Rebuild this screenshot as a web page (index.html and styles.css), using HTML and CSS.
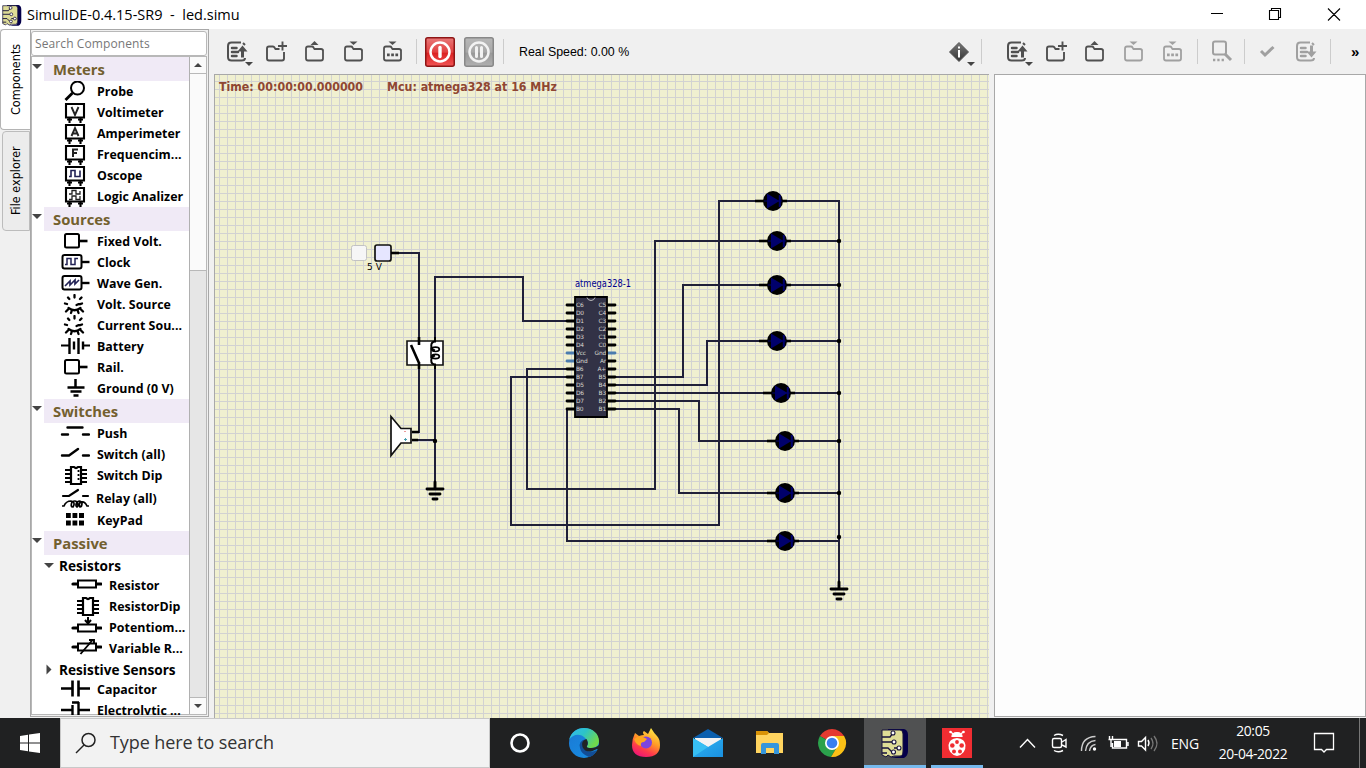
FILE: index.html
```html
<!DOCTYPE html>
<html lang="en">
<head>
<meta charset="utf-8">
<title>SimulIDE-0.4.15-SR9 - led.simu</title>
<link rel="stylesheet" href="styles.css">
</head>
<body>
<svg class="defs" aria-hidden="true">
<defs>
<linearGradient id="gred" x1="0" y1="0" x2="0" y2="1"><stop offset="0" stop-color="#e87878"/><stop offset=".5" stop-color="#e24040"/><stop offset=".55" stop-color="#dc2222"/><stop offset="1" stop-color="#f05555"/></linearGradient>
<linearGradient id="ggrey" x1="0" y1="0" x2="0" y2="1"><stop offset="0" stop-color="#b8b8b8"/><stop offset=".5" stop-color="#a8a8a8"/><stop offset=".55" stop-color="#999"/><stop offset="1" stop-color="#b0b0b0"/></linearGradient>
<linearGradient id="ginfo" x1="0" y1="0" x2="0" y2="1"><stop offset="0" stop-color="#777"/><stop offset="1" stop-color="#333"/></linearGradient>
<linearGradient id="gedge" x1="0" y1="0" x2="1" y2=".5"><stop offset="0" stop-color="#35b8f0"/><stop offset=".5" stop-color="#2cc3c9"/><stop offset="1" stop-color="#70d94c"/></linearGradient>
<linearGradient id="gedge2" x1="0" y1="0" x2="1" y2="1"><stop offset="0" stop-color="#1b78d4"/><stop offset="1" stop-color="#1690e4"/></linearGradient>
<linearGradient id="gfox" x1=".8" y1="0" x2=".3" y2="1"><stop offset="0" stop-color="#fff04a"/><stop offset=".45" stop-color="#ff9a25"/><stop offset=".75" stop-color="#ff3b4b"/><stop offset="1" stop-color="#ee1577"/></linearGradient>
<linearGradient id="gmail" x1="0" y1="0" x2="1" y2="1"><stop offset="0" stop-color="#2fb5f2"/><stop offset="1" stop-color="#1a90e0"/></linearGradient>
<symbol id="list" viewBox="0 0 28 28"><g fill="none" stroke="currentColor" stroke-width="2"><path d="M18 4.600H8.500Q5 4.600 5 8v11q0 3.500 3.500 3.500h10Q22 22.500 22 20M20 5l2 2"/><path d="M9 10h4.500M9 14h6M9 18h4.500" stroke-width="2.500" stroke-linecap="round"/></g></symbol>
<symbol id="up" viewBox="0 0 28 28"><use href="#list"/><path d="M19.500 7.500l5 6h-3.500v6h-3v-6h-3.500z" fill="currentColor"/></symbol>
<symbol id="down" viewBox="0 0 28 28"><use href="#list"/><path d="M19.500 19.500l5-6h-3.500v-6h-3v6h-3.500z" fill="currentColor"/></symbol>
<symbol id="folder" viewBox="0 0 28 28"><path d="M22 11.500v9q0 2-2 2H7q-2 0-2-2v-10q0-2 2-2h4q1 0 1.500 1l1 1.500h6.500q2 0 2 2z" fill="none" stroke="currentColor" stroke-width="1.800"/></symbol>
<symbol id="fup" viewBox="0 0 28 28"><use href="#folder"/><path d="M9.500 7l4-4 4 4z" fill="currentColor"/></symbol>
<symbol id="fdown" viewBox="0 0 28 28"><use href="#folder"/><path d="M9.500 3.500l4 3.500 4-3.500z" fill="currentColor"/></symbol>
<symbol id="fdots" viewBox="0 0 28 28"><use href="#fdown"/><path d="M8 15.500h2.700v2.700H8zM12.200 15.500h2.700v2.700h-2.700zM16.400 15.500h2.700v2.700h-2.700z" fill="currentColor"/></symbol>
<symbol id="fplus" viewBox="0 0 28 28"><path d="M22 14v6.500q0 2-2 2H7q-2 0-2-2v-10q0-2 2-2h4q1 0 1.500 1l1 1.500h4M20.500 3.500v9M16 8h9" fill="none" stroke="currentColor" stroke-width="1.900"/></symbol>
<symbol id="meter" viewBox="0 0 32 21"><path d="M8 2h18v13.500H8zM11.500 16v5M22.500 16v5" fill="none" stroke="#000" stroke-width="2.100"/><path d="M9 17.500h5M20 17.500h5" stroke="#000" stroke-width="2"/></symbol>
<symbol id="rail" viewBox="0 0 32 21"><rect x="7" y="3" width="14" height="13.500" rx="1.500" fill="#fff" stroke="#000" stroke-width="2"/><path d="M21 10h8.500" stroke="#000" stroke-width="2.600"/></symbol>
<symbol id="gen" viewBox="0 0 32 21"><rect x="4.500" y="3" width="19" height="13.500" rx="2" fill="#fff" stroke="#000" stroke-width="2"/><path d="M23 10h8.500" stroke="#000" stroke-width="2.400"/></symbol>
<symbol id="dial" viewBox="0 0 32 21"><g fill="none" stroke="#000" stroke-linecap="round"><path d="M16.500 1v2.500M10 3.500l1.300 1.500M23.500 3.500L22 5M7 9.500l2 .5M24 9.500l-2 .5M8 17.500l2-2M25 17.500l-2-2M13 19l1-3M20.500 19l-1-3" stroke-width="2.300"/><path d="M10.500 14q6 4.500 12 0M18.500 11l2-.8h2" stroke-width="2.200"/></g></symbol>
<symbol id="gnd" viewBox="0 0 32 21"><path d="M17.500 1v8M9.500 9.500h17M12.500 13.500h11M15.500 17.500h5" stroke="#000" stroke-width="2.500"/></symbol>
<symbol id="dip" viewBox="0 0 32 21"><path d="M7 5h22M7 9h22M7 13h22M7 17h22" stroke="#000" stroke-width="2"/><path d="M13 2h3q2 2 4 0h3v17H13z" fill="#fff" stroke="#000" stroke-width="2.200"/></symbol>
<symbol id="res" viewBox="0 0 32 21"><path d="M3 9h28" stroke="#000" stroke-width="3.200" stroke-linecap="round"/><rect x="8" y="5.500" width="18" height="7" fill="#fff" stroke="#000" stroke-width="2"/></symbol>
<symbol id="chip" viewBox="0 0 28 30"><path d="M7 1h16q4 1 4 6v16q0 5-4 7H9l12-2V3L7 3z" fill="#05004a"/><path d="M1 2h18q3 0 3 4v17q0 5-3 5h-6l-3 1-3-2-2 2-4-2z" fill="#dedc96" stroke="#17123c"/><path d="M1 9h8l3-4M1 14h11M1 20h6l4 4M1 25h5M13 20h4" fill="none" stroke="#17123c" stroke-width="1.300"/><g fill="#fff" stroke="#17123c" stroke-width="1.100"><circle cx="12" cy="5" r="2"/><circle cx="13" cy="14" r="2"/><circle cx="18" cy="20" r="2"/><circle cx="12.500" cy="24" r="2"/></g></symbol>
<symbol id="led" viewBox="-20 -12 40 24"><path d="M-18 0H14" stroke="#000" stroke-width="2.600"/><circle r="10" fill="#000"/><path d="M-9 0H9" stroke="#000066" stroke-width="1"/><path d="M-6-7.500L6.500 0-6 7.500z" fill="#00006c"/><path d="M6.800-6v12" stroke="#00006c" stroke-width="2"/></symbol>
</defs>
</svg>
<div class="window">
<header class="titlebar">
 <svg class="appicon" width="20" height="22"><use href="#chip"/></svg>
 <span class="title">SimulIDE-0.4.15-SR9&nbsp; -&nbsp; led.simu</span>
 <svg class="winbtns" width="164" height="29" viewBox="1202 0 164 29"><g fill="none" stroke="#000" stroke-width="1.100"><path d="M1211 13.500h12M1269.500 10.500h9v9h-9zM1271.500 10v-1.500h9v9h-2M1328 8.500l12 12M1340 8.500l-12 12"/></g></svg>
</header>
<main class="main">
 <nav class="tabs"><div class="tab on">Components</div><div class="tab file">File explorer</div></nav>
 <aside class="side">
  <div class="search">Search Components</div>
  <div class="treebox">
   <div class="tree">
    <div class="cat"><i class="tri"></i><b>Meters</b></div>
    <div class="row"><svg><circle cx="19.500" cy="7" r="6.500" fill="none" stroke="#000" stroke-width="2"/><path d="M14.500 12l-7 7" stroke="#000" stroke-width="2.800"/></svg>Probe</div>
    <div class="row"><svg><use href="#meter"/><path d="M13.500 5l3.500 8 3.500-8" fill="none" stroke="#222" stroke-width="1.900"/></svg>Voltimeter</div>
    <div class="row"><svg><use href="#meter"/><path d="M13.500 13L17 5l3.500 8M15 10.500h4" fill="none" stroke="#222" stroke-width="1.900"/></svg>Amperimeter</div>
    <div class="row"><svg><use href="#meter"/><path d="M15 13V5.500h5M15 9h4" fill="none" stroke="#222" stroke-width="2"/></svg>Frequencim...</div>
    <div class="row"><svg><use href="#meter"/><path d="M11 11.500h2v-6h4v6h5v-6" fill="none" stroke="#225" stroke-width="1.600"/></svg>Oscope</div>
    <div class="row"><svg><use href="#meter"/><path d="M11 8h3V4.500h4V8h4V5M11 13.500h3V10h4v3.500h4V10" fill="none" stroke="#222" stroke-width="1.300"/></svg>Logic Analizer</div>
    <div class="cat"><i class="tri"></i><b>Sources</b></div>
    <div class="row"><svg><use href="#rail"/></svg>Fixed Volt.</div>
    <div class="row"><svg><use href="#gen"/><path d="M7 12.500h2v-6h4v6h4v-6h3" fill="none" stroke="#225" stroke-width="1.500"/></svg>Clock</div>
    <div class="row"><svg><use href="#gen"/><path d="M7 13l5-5v4l5-5v4l4-4" fill="none" stroke="#225" stroke-width="1.700"/></svg>Wave Gen.</div>
    <div class="row"><svg><use href="#dial"/></svg>Volt. Source</div>
    <div class="row"><svg><use href="#dial"/></svg>Current Sou...</div>
    <div class="row"><svg><path d="M3 9.500h8M25 9.500h7" stroke="#000" stroke-width="2.200"/><path d="M11.500 2v16M16 5.500v8M20.500 2v16M25 5.500v8" stroke="#000" stroke-width="2.400"/></svg>Battery</div>
    <div class="row"><svg><use href="#rail"/></svg>Rail.</div>
    <div class="row"><svg><use href="#gnd"/></svg>Ground (0 V)</div>
    <div class="cat"><i class="tri"></i><b>Switches</b></div>
    <div class="row"><svg><path d="M4 11.500h6M25 11.500h6M9.500 4.500h15" stroke="#000" stroke-width="2.400" stroke-linecap="round"/></svg>Push</div>
    <div class="row"><svg><path d="M4 11.500h7l9-6.500M25 11.500h6" fill="none" stroke="#000" stroke-width="2.400" stroke-linecap="round"/></svg>Switch (all)</div>
    <div class="row"><svg><use href="#dip"/><path d="M20.500 5v12" stroke="#000" stroke-width="1.800" stroke-dasharray="2 2"/></svg>Switch Dip</div>
    <div class="row relay"><svg><path d="M5 10h6l9-6M25 10h5" fill="none" stroke="#000" stroke-width="2.200" stroke-linecap="round"/><path d="M4 20h2q2-5 7-5 5 1 2 6-3 0-1-5 3-2 5 0 2 4 0 5-2-1 0-5 4-2 5 1 0 4-2 4-2-3 1-5 4-1 6 4h2" fill="none" stroke="#000" stroke-width="1.700"/></svg>Relay (all)</div>
    <div class="row"><svg><path d="M8 3h4.800v5H8zM14.500 3h4.800v5h-4.800zM21 3h5v5h-5zM8 10.500h4.800v5H8zM14.500 10.500h4.800v5h-4.800zM21 10.500h5v5h-5z"/></svg>KeyPad</div>
    <div class="cat"><i class="tri"></i><b>Passive</b></div>
    <div class="sub"><i class="tri"></i>Resistors</div>
    <div class="row deep"><svg><use href="#res"/></svg>Resistor</div>
    <div class="row deep"><svg><use href="#dip"/></svg>ResistorDip</div>
    <div class="row deep"><svg><use href="#res" y="2"/><path d="M18 0v6M15 3l3 3.500 3-3.500" fill="none" stroke="#000" stroke-width="2"/></svg>Potentiom...</div>
    <div class="row deep"><svg><use href="#res"/><path d="M10.500 16L23 1.500M19 2h5v4" fill="none" stroke="#000" stroke-width="1.900"/></svg>Variable R...</div>
    <div class="sub"><i class="tri closed"></i>Resistive Sensors</div>
    <div class="row"><svg><path d="M3 9.500h11M21 9.500h11M14.500 1.500v16M20.500 1.500v16" stroke="#000" stroke-width="2.600"/></svg>Capacitor</div>
    <div class="row"><svg><path d="M3 10h11M21 10h11M20.500 2v18M14.500 5v11M14 2.500h7" stroke="#000" stroke-width="2.400"/></svg>Electrolytic ...</div>
   </div>
   <div class="scroll"><div class="sbtn"><i class="tri rev"></i></div><div class="thumb"></div><div class="sbtn end"><i class="tri"></i></div></div>
  </div>
 </aside>
 <section class="center">
  <div class="toolbar">
   <span class="tool menu"><svg><use href="#up"/></svg></span><span class="tool"><svg><use href="#fplus"/></svg></span><span class="tool"><svg><use href="#fup"/></svg></span><span class="tool"><svg><use href="#fdown"/></svg></span><span class="tool"><svg><use href="#fdots"/></svg></span>
   <i class="sep s1"></i>
   <svg class="pwr" viewBox="0 0 30 30"><rect x=".75" y=".75" width="28.500" height="28.500" rx="2" fill="url(#gred)" stroke="#8e1414" stroke-width="1.500"/><circle cx="15" cy="15" r="9.500" fill="none" stroke="#fff" stroke-width="2.500"/><path d="M15 10.500v9" stroke="#fff" stroke-width="3.400" stroke-linecap="round"/></svg>
   <svg class="pwr" viewBox="0 0 30 30"><rect x=".75" y=".75" width="28.500" height="28.500" rx="2" fill="url(#ggrey)" stroke="#888" stroke-width="1.500"/><circle cx="15" cy="15" r="9.500" fill="none" stroke="#f2f2f2" stroke-width="2.500"/><path d="M12.500 10.500v9M17.500 10.500v9" stroke="#f2f2f2" stroke-width="3" stroke-linecap="round"/></svg>
   <i class="sep"></i>
   <span class="speed">Real Speed: 0.00 %</span>
   <span class="tool menu info"><svg viewBox="0 0 28 28"><path d="M14 4.500L23.500 14 14 23.500 4.500 14z" fill="url(#ginfo)" stroke="#555" stroke-linejoin="round"/><path d="M14 8.500v2M14 12v7.500" stroke="#fff" stroke-width="2"/></svg></span>
   <i class="sep last"></i>
  </div>
  <div class="canvas">
   <svg class="circuit" width="774" height="643" viewBox="215 75 774 643">
    <g class="status"><text x="219" y="91" textLength="144" lengthAdjust="spacingAndGlyphs">Time: 00:00:00.000000</text><text x="387" y="91" textLength="170" lengthAdjust="spacingAndGlyphs">Mcu: atmega328 at 16 MHz</text></g>
    <g class="wires">
     <path d="M398 253H419V341M435 341V277H523V321H567M419 366V432H412M435 366V485M412 440H435"/>
     <path d="M567 369H527V489H655V241H839M567 377H511V525H719V201H839V585M567 409V541H839"/>
     <path d="M615 377H683V285H839M615 385H707V341H839M615 393H839M615 401H699V441H839M615 409H679V493H839"/>
    </g>
    <g><circle cx="839" cy="241" r="2.200"/><circle cx="839" cy="285" r="2.200"/><circle cx="839" cy="341" r="2.200"/><circle cx="839" cy="393" r="2.200"/><circle cx="839" cy="441" r="2.200"/><circle cx="839" cy="493" r="2.200"/><circle cx="839" cy="537" r="2.200"/><circle cx="435" cy="441" r="2.200"/></g>
    <g><use href="#led" x="753" y="189" width="40" height="24"/><use href="#led" x="757" y="229" width="40" height="24"/><use href="#led" x="757" y="273" width="40" height="24"/><use href="#led" x="757" y="329" width="40" height="24"/><use href="#led" x="761" y="381" width="40" height="24"/><use href="#led" x="765" y="429" width="40" height="24"/><use href="#led" x="765" y="481" width="40" height="24"/><use href="#led" x="765" y="529" width="40" height="24"/></g>
    <rect x="351.500" y="245.500" width="15" height="15" rx="2" fill="#f6f6f6" stroke="#c2c2c2"/>
    <rect x="375" y="245" width="16" height="16" rx="2" fill="#e6e6ff" stroke="#111" stroke-width="1.700"/><path d="M391 253h8" stroke="#000" stroke-width="2.600"/>
    <text class="volt" x="367" y="270" textLength="15">5 V</text>
    <path d="M407 341h36v24h-36z" fill="#fff" stroke="#111" stroke-width="1.600"/>
    <path d="M419 337v8M419 369v-7M411 345l8 18" fill="none" stroke="#000" stroke-width="2.600"/>
    <path d="M435 337v4.500C430 342 430 349 435 350.500M435 355.500C430 357 430 364 435 364.500V369" fill="none" stroke="#000" stroke-width="2"/><path d="M431 347.500C431 352 431 357 431 358" fill="none" stroke="#000" stroke-width="1.500"/>
    <ellipse cx="435.500" cy="349.300" rx="3.800" ry="2.200" fill="none" stroke="#000" stroke-width="1.700"/><ellipse cx="435.500" cy="356.500" rx="3.800" ry="2.200" fill="none" stroke="#000" stroke-width="1.700"/>
    <path d="M391 416.500v39l10-12.500h10v-14.500h-10z" fill="#fff" stroke="#111" stroke-width="1.700"/><path d="M412 432h7M412 440h6" stroke="#000" stroke-width="2.600"/><path d="M404 431.500h2" stroke="#e99"/><path d="M404 439.500h3M405.500 438v3" stroke="#48a0b0"/>
    <g stroke="#000" stroke-width="2.900" stroke-linecap="round"><path d="M435 482v6M427 489h16M430 494h10M433 499h4M839 582v6M831 589h16M834 594h10M837 599h4"/></g>
    <text class="chipname" x="575" y="287" textLength="56" lengthAdjust="spacingAndGlyphs">atmega328-1</text>
    <path class="pins" d="M567 305h8M567 313h8M567 321h8M567 329h8M567 337h8M567 345h8M567 369h8M567 377h8M567 385h8M567 393h8M567 401h8M567 409h8M608 305h7M608 313h7M608 321h7M608 329h7M608 337h7M608 345h7M608 361h7M608 369h7M608 377h7M608 385h7M608 393h7M608 401h7M608 409h7"/>
    <path class="pins blue" d="M567 353h8M567 361h8M608 353h7"/>
    <path d="M575 297h32v120h-32z" fill="#323246" stroke="#000" stroke-width="1.800"/><path d="M587 297.500q1 3 4 3t4-3" fill="none" stroke="#bbb"/>
    <g class="pinname"><text x="576" y="307">C6</text><text x="576" y="315">D0</text><text x="576" y="323">D1</text><text x="576" y="331">D2</text><text x="576" y="339">D3</text><text x="576" y="347">D4</text><text x="576" y="355">Vcc</text><text x="576" y="363">Gnd</text><text x="576" y="371">B6</text><text x="576" y="379">B7</text><text x="576" y="387">D5</text><text x="576" y="395">D6</text><text x="576" y="403">D7</text><text x="576" y="411">B0</text></g>
    <g class="pinname r"><text x="606" y="307">C5</text><text x="606" y="315">C4</text><text x="606" y="323">C3</text><text x="606" y="331">C2</text><text x="606" y="339">C1</text><text x="606" y="347">C0</text><text x="606" y="355">Gnd</text><text x="606" y="363">Ar</text><text x="606" y="371">A+</text><text x="606" y="379">B5</text><text x="606" y="387">B4</text><text x="606" y="395">B3</text><text x="606" y="403">B2</text><text x="606" y="411">B1</text></g>
   </svg>
  </div>
 </section>
 <section class="right">
  <div class="toolbar">
   <span class="tool menu"><svg><use href="#up"/></svg></span><span class="tool"><svg><use href="#fplus"/></svg></span><span class="tool"><svg><use href="#fup"/></svg></span><span class="tool off"><svg><use href="#fdown"/></svg></span><span class="tool off"><svg><use href="#fdots"/></svg></span>
   <i class="sep r1"></i>
   <span class="tool off"><svg viewBox="0 0 28 28"><rect x="6" y="3.500" width="13" height="13" rx="2" fill="none" stroke="currentColor" stroke-width="2"/><path d="M18 16l6 6" stroke="currentColor" stroke-width="3"/><path d="M6 22h11" stroke="currentColor" stroke-width="2.300" stroke-dasharray="2.300 2"/></svg></span>
   <i class="sep r2"></i>
   <span class="tool off"><svg viewBox="0 0 28 28"><path d="M8 13l4 4 8.500-8" fill="none" stroke="currentColor" stroke-width="3"/></svg></span><span class="tool off"><svg><use href="#down"/></svg></span>
   <i class="sep r3"></i><span class="more">»</span>
  </div>
  <div class="editor"></div>
 </section>
</main>
<footer class="taskbar">
 <div class="start"><svg width="20" height="20" viewBox="0 0 20 20"><path d="M0 3l8-1.200v7.700H0zM9 1.600L20 0v9.500H9zM0 10.500h8v7.700L0 17zM9 10.500h11V20L9 18.400z" fill="#fff"/></svg></div>
 <div class="find"><svg width="22" height="22" viewBox="0 0 22 22"><circle cx="13.500" cy="8" r="6.500" fill="none" stroke="#222" stroke-width="1.500"/><path d="M9 13l-8 8" stroke="#222" stroke-width="1.500"/></svg><span>Type here to search</span></div>
 <div class="apps">
  <div class="app first"><svg viewBox="0 0 30 30"><circle cx="15" cy="15" r="8.500" fill="none" stroke="#fff" stroke-width="2.600"/></svg></div>
  <div class="app"><svg viewBox="0 0 30 30"><circle cx="15" cy="15" r="15" fill="url(#gedge2)"/><path d="M0 12C2 4 8 0 15 0c9 0 15 6 15 13 0 5-4 7-8 7-4 0-5-1-4-2 2-2 1-6-3-9-5-4-12-2-15 3z" fill="url(#gedge)"/><path d="M17 11q-8 2-6 9 1 6 9 9 5-1 8-7-5 3-10 1-6-4-1-12z" fill="#124d96"/><path d="M17.500 11q-6 2-4 8 3 6 10 4l4.500-2 2 1v-5q-3 3-8 3-5 0-4-2 2-3-.5-7z" fill="#212325"/></svg></div>
  <div class="app"><svg viewBox="0 0 30 30"><path d="M4 5l4 3q3-1 5-1-2-3 0-4l4 3 3-6q3 5 6 8 3 3 3 9 0 12-14 12Q1 29 1 17 1 11 4 5z" fill="url(#gfox)"/><circle cx="15" cy="14.500" r="6" fill="#7d45df"/><path d="M3 11q5-4 9-2l4 2-3 3q-4 0-3 4-5-1-7-7z" fill="#ffa51f"/></svg></div>
  <div class="app"><svg viewBox="0 0 30 30"><path d="M0 10L15 1l15 9z" fill="#0b5fae"/><path d="M2 10h26v12H2z" fill="#f3f3f3"/><path d="M0 10l15 9 15-9v19H0z" fill="url(#gmail)"/><path d="M0 10v19l15-10z" fill="#37bff3"/></svg></div>
  <div class="app"><svg viewBox="0 0 30 30"><path d="M1 3h11l2 2h14v20H1z" fill="#ffd45f"/><path d="M1 3h11l2 2-2 2H1z" fill="#d99307"/><path d="M6 26V17q0-2 2-2h14q2 0 2 2v9h-5v-6h-8v6z" fill="#3596dc"/></svg></div>
  <div class="app"><svg viewBox="0 0 30 30"><path d="M15 15L2.900 8A14 14 0 0 1 27.100 8z" fill="#e53a30"/><path d="M15 15L2.900 8A14 14 0 0 0 14 29l6-10z" fill="#2ba24c"/><path d="M15 15l5 4-6 10A14 14 0 0 0 27.100 8H15z" fill="#fbc116"/><circle cx="15" cy="15" r="7" fill="#fff"/><circle cx="15" cy="15" r="5.300" fill="#397fee"/></svg></div>
  <div class="app active"><svg viewBox="0 0 30 30"><use href="#chip" x="1" width="28" height="30"/></svg></div>
  <div class="app open"><svg viewBox="0 0 30 30"><path d="M0 0h30v30H0z" fill="#f02d32"/><path d="M10 8.500q0-4 5-4t5 4zM9 4l3 3M21 4l-3 3" fill="#fff" stroke="#fff" stroke-width="1.200"/><circle cx="8.500" cy="4" r="1.300" fill="#fff"/><circle cx="21.500" cy="4" r="1.300" fill="#fff"/><path d="M6.500 17Q7 11 15 10q8 1 8.500 7 .5 9-8.500 11-9-2-8.500-11z" fill="#fff"/><g fill="#f02d32"><circle cx="15" cy="14" r="1.900"/><circle cx="10.300" cy="17.500" r="2.300"/><circle cx="19.700" cy="17.500" r="2.300"/><circle cx="12" cy="23.500" r="2"/><circle cx="18" cy="23.500" r="2"/></g></svg></div>
 </div>
 <svg class="tray" width="152" height="50" viewBox="1010 718 152 50"><g fill="none" stroke="#fff" stroke-width="1.400"><path d="M1020 747.500l7.500-8 7.500 8"/><rect x="1052.500" y="738.500" width="9" height="9" rx="1.500"/><path d="M1062 742l4-2.500v7.500l-4-2M1054 735.500q4-2.500 9 0M1054 750.500q4 2.500 9 0"/><path d="M1081.500 751q0-14 14-14.500M1085.500 751q1-10 10-10.500M1089.500 751q1-6 6-6.500" stroke="#ccc"/><path d="M1113.500 739.500h13v8.500h-14v-5M1128 742v4M1109.500 736v3M1112.500 736v3M1108.500 739.500h5M1111 740v7"/><path d="M1138.500 741.500h3l4-4v12.500l-4-4h-3z"/><path d="M1148 740q2 3 0 6"/><path d="M1151 738q4 5.500 0 11M1154 736q6 7.500 0 15" stroke="#777"/></g><path d="M1114 741h7v6h-7z" fill="#fff"/><circle cx="1094.500" cy="749" r="1.700" fill="#fff"/></svg>
 <span class="eng">ENG</span>
 <div class="clock"><div>20:05</div><div>20-04-2022</div></div>
 <svg class="note" width="22" height="22" viewBox="0 0 22 22"><path d="M1.500 1.500h19v16h-7l-2.500 2.500-2.500-2.500h-7z" fill="none" stroke="#fff" stroke-width="1.300"/></svg>
 <i class="peek"></i>
</footer>
</div>
</body>
</html>
```
FILE: styles.css
```css
*{box-sizing:border-box}
body{margin:0;font-family:"Open Sans","Noto Sans",sans-serif;color:#000}
.defs{position:absolute;width:0;height:0}
.window{width:1366px;height:768px;display:flex;flex-direction:column;overflow:hidden;background:#f0f0f0}
.titlebar{height:29px;flex:none;background:#fff;display:flex;align-items:center}
.appicon{margin-left:2px}
.title{font-size:14.500px;letter-spacing:0;margin-left:5px;white-space:pre}
.winbtns{margin-left:auto}
.main{flex:none;height:689px;display:flex}
.tabs{width:30px;flex:none}
.tab{writing-mode:vertical-rl;transform:rotate(180deg);font:12.500px "DejaVu Sans Condensed","DejaVu Sans",sans-serif;font-stretch:condensed;display:flex;align-items:center;justify-content:center;line-height:26px}
.tab.on{width:30px;height:101px;background:#fff;border:1px solid #b4b4b4;border-left:0;border-radius:0 4px 4px 0}
.tab.file{width:28px;height:100px;margin:1px 0 0 2px;background:#ececec;border:1px solid #bcbcbc;border-radius:0 4px 4px 0}
.side{width:179px;height:688px;flex:none;border:1px solid #a8a8a8;padding:1px 1px 1px 0;display:flex;flex-direction:column;background:#f0f0f0}
.search{height:25px;flex:none;background:#fff;border:1px solid #b8b8b8;border-radius:3px;font-size:12px;line-height:23px;padding-left:3px;color:#777;letter-spacing:.1px}
.treebox{flex:1;min-height:0;border:1px solid #b8b8b8;display:flex;background:#fff}
.tree{width:157px;height:658px;flex:none;overflow:hidden}
.cat{height:24px;margin-left:12px;background:#f0eaf6;display:flex;align-items:center;color:#73602f}
.cat b{margin-left:11px;font-size:14.800px;font-weight:700}
.tri{border:5px solid transparent;border-top-color:#444;border-bottom:0;width:10px;flex:none}
.cat .tri{margin:-5px 0 0 -12px}
.row{height:21px;display:flex;align-items:center;font-size:12.400px;font-weight:700;padding-left:26px;white-space:nowrap;letter-spacing:.03px}
.row svg{width:32px;height:21px;margin-right:7px;flex:none}
.row.relay{height:24px}
.row.relay svg{height:24px;margin-right:6px}
.row.deep{padding-left:38px}
.sub{height:20px;display:flex;align-items:center;gap:5px;padding-left:12px;font-size:13.600px;font-weight:700;white-space:nowrap}
.closed{transform:rotate(-90deg)}
.scroll{flex:1;background:#e6e6e6;border-left:1px solid #b0b0b0;display:flex;flex-direction:column}
.sbtn{height:17px;background:#fafafa;border-bottom:1px solid #b8b8b8;display:grid;place-items:center;flex:none}
.sbtn .tri{border-width:4px 4px 0;width:8px}
.rev{transform:rotate(180deg)}
.thumb{height:197px;background:#fafafa;border-bottom:1px solid #b8b8b8}
.end{margin-top:auto;border-top:1px solid #b8b8b8;border-bottom:0}
.center{width:780px;flex:none}
.toolbar{height:45px;display:flex;align-items:center;padding-left:8px;color:#505050}
.tool{width:39px;display:flex;justify-content:center;flex:none;position:relative}
.tool svg{width:28px;height:28px}
.tool.menu::after{content:"";position:absolute;right:3px;bottom:0;border:4.500px solid transparent;border-top:4.500px solid #444;border-bottom:0}
.off{color:#a0a0a0}
.sep{width:1px;height:25px;background:#ccc;flex:none}
.s1{margin:0 8px 0 4px}
.pwr{width:30px;height:30px;margin-right:9px;flex:none}
.speed{font:12.400px "Liberation Sans",sans-serif;color:#000;margin-left:15px;width:112px;white-space:nowrap}
.info{margin-left:auto;margin-right:3px}
.toolbar .last{margin-right:7px}
.canvas{margin-left:5px;width:775px;height:644px;border:1px solid #a8a8a8;border-right:0;border-bottom:0;background-color:#f0f0d0;background-image:linear-gradient(90deg,#d2d2d2 1px,transparent 1px),linear-gradient(#d2d2d2 1px,transparent 1px);background-size:8px 8px;background-position:4px 6px}
.circuit{display:block}
.status{font:bold 12.500px "DejaVu Sans Condensed","DejaVu Sans",sans-serif;font-stretch:condensed;fill:#8f4632}
.wires{fill:none;stroke:#202039;stroke-width:2}
.volt{font:9px "DejaVu Sans",sans-serif}
.chipname{font:10px "DejaVu Sans",sans-serif;fill:#000090}
.pins{stroke:#000;stroke-width:2.800;stroke-linecap:round}
.pins.blue{stroke:#4b7caf}
.pinname{font:5.900px "DejaVu Sans",sans-serif;fill:#d8d8d0;letter-spacing:-.2px}
.r{text-anchor:end}
.right{width:377px;flex:none}
.r1{margin:0 3px 0 5px}
.r2{margin:0 2px 0 4px}
.r3{margin-left:5px}
.more{font:bold 15px "Liberation Sans",sans-serif;color:#000;margin-left:20px}
.editor{margin-left:5px;height:643px;background:#fdfdfd;border:1px solid #a8a8a8}
.taskbar{height:50px;flex:none;background:#202122;display:flex;align-items:center;color:#fff}
.start{width:60px;display:flex;justify-content:center}
.find{width:430px;height:50px;background:#f2f2f2;border:1px solid #c8c8c8;display:flex;align-items:center;padding-left:14px;gap:13px;color:#333;font-size:18px;letter-spacing:-.09px}
.find span{white-space:nowrap;padding-bottom:2px}
.apps{display:flex;margin-left:-1px}
.app{width:62px;height:50px;display:flex;align-items:center;justify-content:center;position:relative}
.app.first{margin-right:2px}
.app svg{width:30px;height:30px}
.active{background:#505152;margin-left:1px}
.active::after,.open::after{content:"";position:absolute;left:0;right:0;bottom:0;height:3px;background:#76b9ed}
.open::after{left:5px;right:5px}
.tray{margin-left:22px}
.eng{font-size:14px;width:36px;margin-left:9px;letter-spacing:-.2px}
.clock{width:92px;text-align:center;font-size:13.800px;line-height:23px;letter-spacing:-.35px;padding-bottom:2px}
.note{margin-left:14px}
.peek{width:1px;height:50px;background:#777;margin-left:24px}
```
